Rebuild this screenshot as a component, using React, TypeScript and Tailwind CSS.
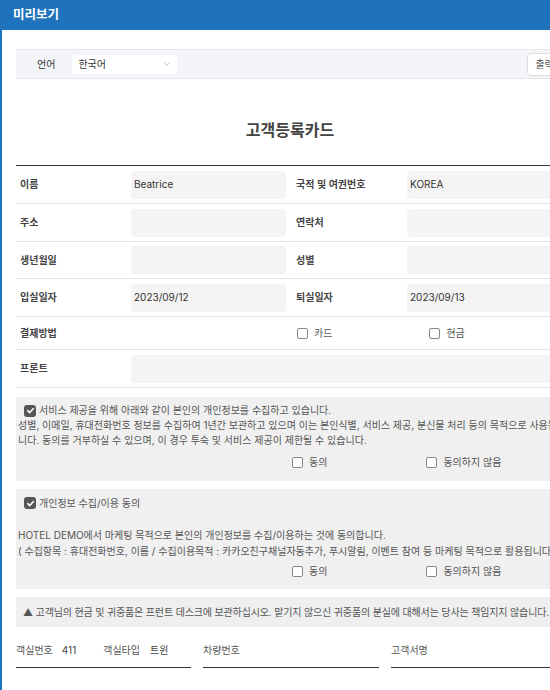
import { ChevronDown } from 'lucide-react';

const font = { fontFamily: 'Inter, "Noto Sans CJK KR", sans-serif' };

function Box({ checked = false }: { checked?: boolean }) {
  if (checked) {
    return (
      <span className="inline-flex h-[12px] w-[12px] shrink-0 items-center justify-center rounded-[3px] bg-[#555]">
        <svg width="9" height="9" viewBox="0 0 10 10">
          <path d="M2 5.2 4.2 7.3 8.2 2.8" fill="none" stroke="#fff" strokeWidth="1.8" strokeLinecap="round" strokeLinejoin="round" />
        </svg>
      </span>
    );
  }
  return <span className="inline-block h-[11px] w-[11px] shrink-0 rounded-[2px] border border-[#888] bg-white" />;
}

function Check({ label, x }: { label: string; x: string }) {
  return (
    <span className={`flex items-center gap-[6px] whitespace-nowrap ${x}`}>
      <Box />
      <span className="text-[10px] text-[#555]">{label}</span>
    </span>
  );
}

function Row({
  a,
  av,
  b,
  bv,
  h = 'h-[38px]',
}: {
  a: string;
  av?: string;
  b: string;
  bv?: string;
  h?: string;
}) {
  return (
    <div className={`flex items-center border-b border-[#e2e2e2] ${h}`}>
      <div className="w-[115px] pl-[4px] text-[10px] font-semibold text-[#444]">{a}</div>
      <div className="flex h-[28px] w-[155px] items-center rounded-[4px] bg-[#f4f4f4] px-[3px] text-[10px] text-[#333]">{av}</div>
      <div className="ml-[10px] w-[111px] text-[10px] font-semibold text-[#444]">{b}</div>
      <div className="flex h-[28px] flex-1 items-center rounded-[4px] bg-[#f4f4f4] px-[3px] text-[10px] text-[#333]">{bv}</div>
    </div>
  );
}

export default function App() {
  return (
    <div className="h-[690px] w-[550px] overflow-hidden bg-white" style={font}>
      <div className="flex h-[30px] items-center bg-[#1f73bd] pl-[13px] text-[12.5px] font-bold text-white">미리보기</div>
      <div className="h-[660px] border-l-2 border-[#1f73bd] pl-[14px] pt-[19px]">
        <div className="w-[548px]">
          <div className="flex h-[30px] items-center whitespace-nowrap border-y border-[#e3e6ea] bg-[#f3f5f8]">
            <span className="ml-[21px] shrink-0 text-[10px] text-[#333]">언어</span>
            <div className="ml-[17px] flex h-[19px] w-[105px] shrink-0 items-center justify-between rounded-[4px] bg-white pl-[6px] pr-[5px] text-[10px] text-[#333]">
              한국어
              <ChevronDown size={10} strokeWidth={1.5} className="text-[#999]" />
            </div>
            <div className="ml-[350px] flex h-[23px] w-[40px] shrink-0 items-center rounded-[4px] border border-[#ddd] bg-white pl-[7px] text-[10px] text-[#555]">출력</div>
          </div>

          <h1 className="mb-[24px] mt-[40px] text-center text-[16px] font-bold leading-[22px] text-[#444]">고객등록카드</h1>

          <div className="border-t-[1.5px] border-[#333]">
            <Row a="이름" av="Beatrice" b="국적 및 여권번호" bv="KOREA" />
            <Row a="주소" b="연락처" />
            <Row a="생년월일" b="성별" h="h-[37px]" />
            <Row a="입실일자" av="2023/09/12" b="퇴실일자" bv="2023/09/13" />
            <div className="flex h-[33px] items-center border-b border-[#e2e2e2]">
              <div className="w-[280px] pl-[4px] text-[10px] font-semibold text-[#444]">결제방법</div>
              <Check label="카드" x="ml-[1px]" />
              <Check label="현금" x="ml-[97px]" />
            </div>
            <div className="flex h-[38px] items-center border-b border-[#e2e2e2]">
              <div className="w-[115px] pl-[4px] text-[10px] font-semibold text-[#444]">프론트</div>
              <div className="h-[28px] flex-1 rounded-[4px] bg-[#f4f4f4]" />
            </div>
          </div>

          <div className="mt-[9px] h-[84px] bg-[#f0f0f0] pl-[2px] pt-[6px] text-[10px] leading-[15px] text-[#555]">
            <div className="flex items-center gap-[3px] whitespace-nowrap pl-[6px]">
              <Box checked />
              서비스 제공을 위해 아래와 같이 본인의 개인정보를 수집하고 있습니다.
            </div>
            <div className="whitespace-nowrap">성별, 이메일, 휴대전화번호 정보를 수집하여 1년간 보관하고 있으며 이는 본인식별, 서비스 제공, 분신물 처리 등의 목적으로 사용됩</div>
            <div className="whitespace-nowrap">니다. 동의를 거부하실 수 있으며, 이 경우 투숙 및 서비스 제공이 제한될 수 있습니다.</div>
            <div className="mt-[7px] flex">
              <Check label="동의" x="ml-[274px]" />
              <Check label="동의하지 않음" x="ml-[99px]" />
            </div>
          </div>

          <div className="mt-[8px] h-[100px] bg-[#f0f0f0] pl-[2px] pt-[6px] text-[10px] leading-[16px] text-[#555]">
            <div className="flex items-center gap-[3px] whitespace-nowrap pl-[6px]">
              <Box checked />
              개인정보 수집/이용 동의
            </div>
            <div className="mt-[16px] whitespace-nowrap">HOTEL DEMO에서 마케팅 목적으로 본인의 개인정보를 수집/이용하는 것에 동의합니다.</div>
            <div className="whitespace-nowrap">( 수집항목 : 휴대전화번호, 이름 / 수집이용목적 : 카카오친구채널자동추가, 푸시알림, 이벤트 참여 등 마케팅 목적으로 활용됩니다.</div>
            <div className="mt-[4px] flex">
              <Check label="동의" x="ml-[274px]" />
              <Check label="동의하지 않음" x="ml-[99px]" />
            </div>
          </div>

          <div className="mt-[8px] flex h-[30px] items-center whitespace-nowrap bg-[#efefef] pl-[7px] text-[10px] tracking-[-0.15px] text-[#555]">
            ▲ 고객님의 현금 및 귀중품은 프런트 데스크에 보관하십시오. 맡기지 않으신 귀중품의 분실에 대해서는 당사는 책임지지 않습니다.
          </div>

          <div className="mt-[16px] flex gap-[12px] text-[10px] text-[#444]">
            <div className="flex h-[25px] w-[175px] items-start whitespace-nowrap border-b-[1.5px] border-[#333]">
              <span className="text-[#555]">객실번호</span>
              <span className="ml-[9px]">411</span>
              <span className="ml-[27px] text-[#555]">객실타입</span>
              <span className="ml-[10px]">트윈</span>
            </div>
            <div className="h-[25px] w-[176px] border-b-[1.5px] border-[#333] text-[#555]">차량번호</div>
            <div className="h-[25px] flex-1 border-b-[1.5px] border-[#333] text-[#555]">고객서명</div>
          </div>
        </div>
      </div>
    </div>
  );
}
